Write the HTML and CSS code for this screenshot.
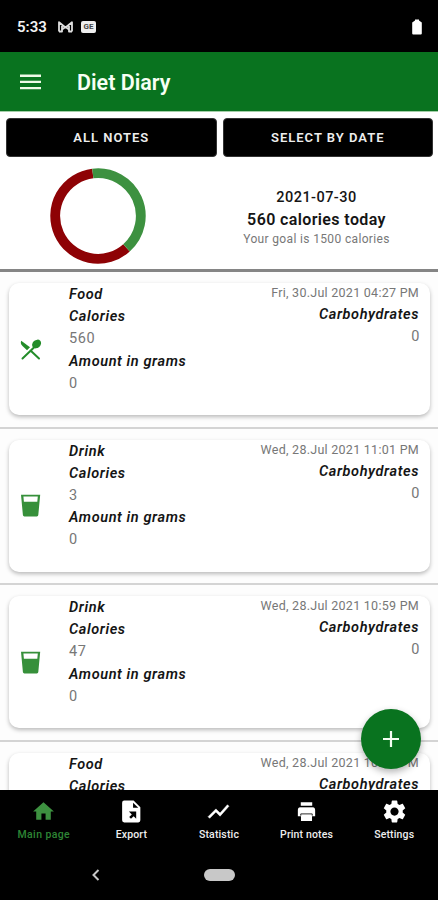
FILE: index.html
```html
<!DOCTYPE html>
<html lang="en">
<head>
<meta charset="utf-8">
<title>Diet Diary</title>
<link rel="stylesheet" href="styles.css">
</head>
<body>
<div class="phone">
  <div class="status">
    <span class="clock">5:33</span>
    <svg class="mail" width="17" height="13" viewBox="0 0 17 13"><path d="M2 11.500V2.200L8.500 7.500 15 2.200v9.300M2 11.500h3V6M15 11.500h-3V6M5 9.500L8.500 7l3.500 2.500" fill="none" stroke="#dedede" stroke-width="1.800" stroke-linejoin="round"/></svg>
    <span class="news">GE</span>
    <svg class="battery" width="10" height="16" viewBox="0 0 10 16"><path d="M3 1.500V.5h4v1l2.800 2V14.500Q9.800 15.500 8.800 15.500H1.200Q.2 15.500 .2 14.500V3.500z" fill="#fff"/></svg>
  </div>
  <header class="appbar">
    <svg width="21" height="16" viewBox="0 0 21 16"><path d="M0 1.700h21M0 7.900h21M0 14.100h21" stroke="#eefae6" stroke-width="2.400"/></svg>
    <h1>Diet Diary</h1>
  </header>
  <div class="filters">
    <button class="all">ALL NOTES</button>
    <button class="date">SELECT BY DATE</button>
  </div>
  <section class="summary">
    <div class="chart">
      <svg width="96" height="96" viewBox="0 0 96 96"><g fill="none" stroke-width="9.800"><path d="M42.800 5.500A42.800 42.800 0 1 0 76.500 79.900" stroke="#8e0205"/><path d="M42.800 5.500A42.800 42.800 0 0 1 76.500 79.900" stroke="#3d9140"/></g></svg>
    </div>
    <div class="totals">
      <p class="day">2021-07-30</p>
      <p class="today">560 calories today</p>
      <p class="goal">Your goal is 1500 calories</p>
    </div>
  </section>
  <main class="list">
    <div class="item"><article class="card">
      <div class="icon"><svg width="22" height="22" viewBox="0 0 22 22"><g fill="none" stroke="#238c29" stroke-linecap="round"><path d="M2.500 19.500L15 7.500M10.500 11.500l8.500 8" stroke-width="2"/></g><path d="M1.200 1.700Q0 4.500 2.500 7l4.500 4.200 3-2.900z" fill="#238c29"/><ellipse cx="16.600" cy="5" rx="4.900" ry="3.900" transform="rotate(-42 16.600 5)" fill="#238c29"/></svg></div>
      <div class="info"><b>Food</b><b>Calories</b><span>560</span><b>Amount in grams</b><span>0</span></div>
      <div class="side"><time>Fri, 30.Jul 2021 04:27 PM</time><b>Carbohydrates</b><span>0</span></div>
    </article></div>
    <div class="item"><article class="card">
      <div class="icon"><svg width="22" height="24" viewBox="0 0 22 24"><path d="M1 .8h19.200L18.300 21q-.1 1.400-1.500 1.400H4.400Q3 22.400 2.900 21zM3.400 2.500l.5 5.200h13.400l.5-5.200z" fill="#36903a" fill-rule="evenodd"/></svg></div>
      <div class="info"><b>Drink</b><b>Calories</b><span>3</span><b>Amount in grams</b><span>0</span></div>
      <div class="side"><time>Wed, 28.Jul 2021 11:01 PM</time><b>Carbohydrates</b><span>0</span></div>
    </article></div>
    <div class="item"><article class="card">
      <div class="icon"><svg width="22" height="24" viewBox="0 0 22 24"><path d="M1 .8h19.200L18.300 21q-.1 1.400-1.500 1.400H4.400Q3 22.400 2.900 21zM3.400 2.500l.5 5.200h13.400l.5-5.200z" fill="#36903a" fill-rule="evenodd"/></svg></div>
      <div class="info"><b>Drink</b><b>Calories</b><span>47</span><b>Amount in grams</b><span>0</span></div>
      <div class="side"><time>Wed, 28.Jul 2021 10:59 PM</time><b>Carbohydrates</b><span>0</span></div>
    </article></div>
    <div class="item"><article class="card">
      <div class="icon"></div>
      <div class="info"><b>Food</b><b>Calories</b></div>
      <div class="side"><time>Wed, 28.Jul 2021 10:58 PM</time><b>Carbohydrates</b></div>
    </article></div>
  </main>
  <nav class="tabs">
    <a class="active"><svg width="25" height="25" viewBox="0 0 24 24"><path d="M10 20v-6h4v6h5v-8h3L12 3 2 12h3v8z"/></svg>Main page</a>
    <a><svg width="25" height="25" viewBox="0 0 24 24"><path d="M6 1.500h8l6.500 6.500v12.500a2 2 0 0 1-2 2H5a2 2 0 0 1-2-2v-17a2 2 0 0 1 2-2z"/><path d="M13.500 3.500v5h5z" fill="#000"/><path d="M9.500 12h7v7l-2.400-2.400L11.500 19l-1.700-1.700 2.500-2.500z" fill="#000"/></svg>Export</a>
    <a><svg width="25" height="25" viewBox="0 0 24 24"><path d="M3.500 18.500l6-6 4 4L22 6.920l-1.410-1.410-7.090 7.970-4-4L2 16.990z" stroke="#fff" stroke-width=".5"/></svg>Statistic</a>
    <a><svg width="25" height="25" viewBox="0 0 24 24"><path d="M6.500 3h11v3.500h-11zM18 8H6c-1.500 0-2.300 1.200-2.300 2.800v5.700h3V21h10.600v-4.500h3v-5.700c0-1.600-.8-2.800-2.300-2.800z"/><path d="M6.500 16v-1.700h11V16M6 7.300h12" fill="none" stroke="#000" stroke-width=".8"/></svg>Print notes</a>
    <a><svg width="25" height="25" viewBox="0 0 24 24"><path transform="translate(-1.200 -1.200) scale(1.100)" d="M19.140 12.940c.04-.3.060-.61.060-.94 0-.32-.02-.64-.07-.94l2.030-1.580c.18-.14.23-.41.120-.61l-1.920-3.320c-.12-.22-.37-.29-.59-.22l-2.390.96c-.5-.38-1.030-.7-1.620-.94l-.36-2.540c-.04-.24-.24-.41-.48-.41h-3.840c-.24 0-.43.17-.47.41l-.36 2.540c-.59.240-1.130.57-1.620.94l-2.390-.96c-.22-.08-.47 0-.59.220L2.740 8.870c-.12.210-.08.470.12.610l2.030 1.580c-.05.300-.09.630-.09.940s.02.640.070.940l-2.030 1.580c-.18.140-.23.410-.12.610l1.920 3.320c.12.220.37.290.59.220l2.390-.96c.5.380 1.030.7 1.620.94l.36 2.540c.05.240.24.410.48.410h3.840c.24 0 .44-.17.47-.41l.36-2.540c.59-.24 1.130-.56 1.620-.94l2.390.96c.22.080.47 0 .59-.22l1.920-3.320c.12-.22.070-.47-.12-.61zM12 15.600c-1.980 0-3.600-1.620-3.600-3.600s1.620-3.600 3.600-3.600 3.600 1.620 3.600 3.600-1.620 3.600-3.600 3.600z"/></svg>Settings</a>
  </nav>
  <footer class="system">
    <svg width="9" height="14" viewBox="0 0 9 14"><path d="M7.500 2L2.500 7l5 5" fill="none" stroke="#c8c8c8" stroke-width="2"/></svg>
    <i class="pill"></i><i></i>
  </footer>
  <button class="fab" aria-label="Add"><svg width="16" height="16" viewBox="0 0 16 16"><path d="M8 0v16M0 8h16" stroke="#f4fff2" stroke-width="2.200"/></svg></button>
</div>
</body>
</html>
```
FILE: styles.css
```css
* { box-sizing: border-box; }
body { margin: 0; font-family: Roboto, "Liberation Sans", sans-serif; background: #fff; }
h1, p { margin: 0; }
button { border: 0; padding: 0; font-family: inherit; }
.phone { position: relative; width: 438px; height: 900px; display: flex; flex-direction: column; overflow: hidden; }
.status { flex: none; height: 52px; background: #000; display: flex; align-items: center; padding: 1px 16px 0 17px; color: #f2f2f2; }
.clock { width: 40px; font-size: 15px; font-weight: 600; }
.news { width: 15px; height: 12px; margin-left: 7px; border-radius: 2px; background: #eee; color: #444; font-size: 8px; font-weight: 700; line-height: 12px; text-align: center; }
.battery { margin-left: auto; }
.appbar { flex: none; height: 60px; background: #09731f; border-bottom: 1px solid #a5cfa9; display: flex; align-items: center; padding: 0 20px; gap: 36px; color: #f7fff4; }
.appbar h1 { font-size: 21.500px; font-weight: 600; line-height: 26px; padding-top: 3px; letter-spacing: 0; }
.filters { flex: none; display: flex; gap: 6px; padding: 6px 5px 0 6px; height: 45px; }
.filters button { flex: 1; height: 39px; background: #000; border: 1px solid #333; border-radius: 4px; color: #eee; font-size: 13px; font-weight: 600; letter-spacing: 1px; }
.summary { flex: none; height: 115px; border-bottom: 3px solid #858585; display: flex; padding-top: 11px; }
.chart { width: 195px; display: flex; justify-content: center; align-items: flex-start; }
.totals { width: 243px; text-align: center; padding: 20px 0 0; color: #151515; }
.day { font-size: 14.500px; line-height: 20px; font-weight: 500; letter-spacing: .45px; }
.today { font-size: 16px; line-height: 23px; font-weight: 600; letter-spacing: .38px; }
.goal { font-size: 12px; line-height: 17px; letter-spacing: .35px; color: #777; }
.list { flex: 1; min-height: 0; overflow: hidden; background: #fdfdfd; }
.item { height: 156.500px; padding: 11px 8px 0 9px; border-bottom: 2px solid #d4d4d4; }
.card { height: 132px; border-radius: 10px; background: #fff; box-shadow: 0 2px 4px rgba(0,0,0,.27); display: flex; padding: 1px 11px 0 0; }
.icon { width: 60px; display: flex; align-items: center; padding-left: 11px; }
.info, .side { display: flex; flex-direction: column; font-size: 14.500px; line-height: 22.200px; }
.info { flex: 1; }
.side { align-items: flex-end; }
.card b { font-weight: 600; font-style: italic; color: #151515; letter-spacing: .6px; }
.card span { color: #777; font-weight: 400; letter-spacing: .6px; }
.card time { font-size: 12.500px; line-height: 20px; color: #777; letter-spacing: .27px; margin-top: -1px; margin-bottom: 1px; }
.side span { margin-right: -1px; }
.tabs { flex: none; height: 60px; background: #000; display: grid; grid-template-columns: repeat(5, 1fr); padding-top: 9px; }
.tabs a { display: flex; flex-direction: column; align-items: center; color: #eee; fill: #fff; font-size: 10.500px; line-height: 14px; font-weight: 500; gap: 4px; letter-spacing: .15px; white-space: nowrap; }
.tabs .active { color: #2e8635; fill: #3d9140; letter-spacing: .4px; }
.system { flex: none; height: 50px; background: #000; display: grid; grid-template-columns: 1fr 30px 1fr; align-items: center; padding-bottom: 1px; }
.system svg { margin-left: 91px; }
.pill { width: 31px; height: 12px; border-radius: 6px; background: #c8c8c8; }
.fab { position: absolute; left: 361px; top: 709px; width: 60px; height: 60px; border-radius: 50%; background: #09731f; box-shadow: 0 3px 7px rgba(0,0,0,.3); display: flex; align-items: center; justify-content: center; }
```
